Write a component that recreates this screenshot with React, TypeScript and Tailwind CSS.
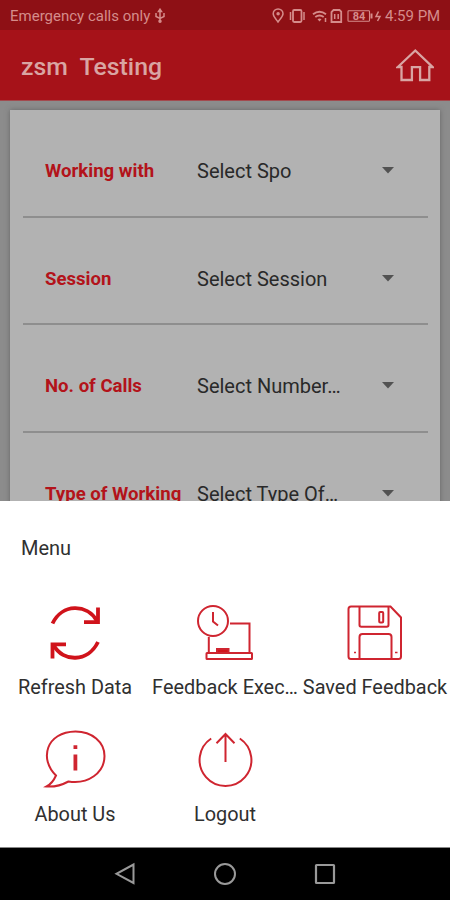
import type { ReactNode } from "react";

interface Field {
  label: string;
  value: string;
}

interface MenuEntry {
  label: string;
  icon: ReactNode;
}

const FIELDS: Field[] = [
  { label: "Working with", value: "Select Spo" },
  { label: "Session", value: "Select Session" },
  { label: "No. of Calls", value: "Select Number…" },
  { label: "Type of Working", value: "Select Type Of…" },
];

function MenuIcon({ children, width = 2 }: { children: ReactNode; width?: number }) {
  return (
    <svg viewBox="0 0 64 64" className="h-16 w-16" fill="none" stroke="#cf2530" strokeWidth={width}>
      {children}
    </svg>
  );
}

const MENU: MenuEntry[] = [
  {
    label: "Refresh Data",
    icon: (
      <MenuIcon width={3.8}>
        <g stroke="#d0131b">
          <path d="M9.5 22.500C19 2.500 44 2.500 54 20" />
          <path d="M55 6.500v14.700H41" />
          <path d="M55 41C45 61.500 20 61.500 10.500 44" />
          <path d="M9.500 57.500V43.300H23" />
        </g>
      </MenuIcon>
    ),
  },
  {
    label: "Feedback Exec…",
    icon: (
      <MenuIcon>
        <circle cx="20" cy="20" r="15" />
        <path d="M20 11v9.500l5 4" />
        <path d="M37 22.500h19.500V52M15.800 36v16" />
        <rect x="13.500" y="52" width="45.500" height="6" rx="0.500" />
        <rect x="24" y="48" width="11.500" height="4" fill="#d0131b" />
      </MenuIcon>
    ),
  },
  {
    label: "Saved Feedback",
    icon: (
      <MenuIcon>
        <path d="M8 5.500h39.500L58 16.500V55.500q0 2.500-2.500 2.500H8q-2.500 0-2.500-2.500V8q0-2.500 2.500-2.500z" />
        <path d="M16.500 5.500V24q0 1.800 1.800 1.800h25.400q1.800 0 1.800-1.800V5.500" />
        <rect x="36.200" y="11" width="4" height="10.500" rx="1" />
        <path d="M16.500 58V36q0-3 3-3h26q3 0 3 3v22" />
        <path d="M11 51.500h2M52 51.500h2.500" strokeWidth="1.500" />
      </MenuIcon>
    ),
  },
  {
    label: "About Us",
    icon: (
      <MenuIcon>
        <path d="M13 47.500C-4 31 3 4 32.500 3.500C49 3.500 61.500 14 61.500 28C61.500 45 45 56.500 25.500 53.500C18 57.500 10 59 3.500 58.500C8.500 56 11 52 13 47.500z" />
        <path d="M32.400 26.500v16M32.400 17.300v3.600" strokeWidth="3.800" />
      </MenuIcon>
    ),
  },
  {
    label: "Logout",
    icon: (
      <MenuIcon>
        <path d="M18.200 10.500A25.900 25.900 0 1 0 46.800 10.500" />
        <path d="M32.500 34V6M23.500 15.200l9-9.200l9 9.200" />
      </MenuIcon>
    ),
  },
];

function StatusBar() {
  return (
    <div className="flex h-[30px] shrink-0 items-center justify-between bg-[#8e1015] pl-2.5 pr-[9px] pt-0.5 text-[15px] text-[#d58c8b]">
      <div className="flex items-center gap-1">
        <span>Emergency calls only</span>
        <svg viewBox="0 0 12 16" className="h-4 w-3" fill="none" stroke="currentColor" strokeWidth="1.500">
          <path d="M6 2v11M2 5v3.500L6 10.500l4-2V5" />
          <path d="M4.500 3.500L6 1.200l1.500 2.300z" fill="currentColor" />
          <circle cx="6" cy="13.200" r="1" fill="currentColor" />
        </svg>
      </div>
      <div className="flex items-center">
        <svg viewBox="0 0 110 18" className="h-[18px] w-[110px]" fill="none" stroke="currentColor" strokeWidth="1.500">
          <path d="M6 15C3.500 11.500 1.200 9.500 1.200 6.800a4.900 4.900 0 0 1 9.800 0C11 9.500 8.500 11.500 6 15z" />
          <circle cx="6.100" cy="6.800" r="1" fill="currentColor" />
          <rect x="21" y="3" width="8.500" height="12" rx="1.200" strokeWidth="1.800" />
          <path d="M18.500 5v8M32 5v8" />
          <path d="M41 7.200q6.500-4.800 13 0M43.300 10q4.200-3 8.400 0" strokeWidth="1.900" />
          <path d="M47.500 14.500l-2-2.300q2-1.500 4 0z" fill="currentColor" stroke="none" />
          <path d="M53.500 11v4" />
          <path d="M61.500 3h6l1.700 1.700V15H59.500V5z" strokeWidth="1.800" />
          <path d="M62.700 7v5M66.200 7v5" />
          <rect x="76" y="3.800" width="21.500" height="10.500" rx="0.800" strokeWidth="1.100" />
          <path d="M99.500 6.500v5" strokeWidth="2" />
          <text x="87" y="13" textAnchor="middle" fontSize="11" fontWeight="700" fill="currentColor" stroke="none">
            84
          </text>
          <path d="M106.500 4.500l-2.500 5h4l-2.500 4.500" />
        </svg>
        <span className="ml-[3px] w-14 whitespace-nowrap text-[15px]">4:59 PM</span>
      </div>
    </div>
  );
}

function Header() {
  return (
    <header className="flex h-[70px] shrink-0 items-center justify-between bg-[#a61219] pl-[21px] pr-4 text-[#d9a5a3]">
      <h1 className="whitespace-pre pt-1 text-[24.800px] font-medium leading-none">zsm  Testing</h1>
      <svg viewBox="0 0 38 34" className="h-[34px] w-[38px]" fill="none" stroke="currentColor" strokeWidth="2.300">
        <path d="M1.800 19L19.300 2.500L36.500 19h-3.200V32h-9.200V19.200h-8.200V32H5.500V19z" />
      </svg>
    </header>
  );
}

function FieldRow({ label, value }: Field) {
  return (
    <div className="flex h-[107.500px] shrink-0 items-center border-b-2 border-[#8e8e8e] pl-[22px] pt-4">
      <span className="w-[152px] whitespace-nowrap pt-[3px] text-[18.600px] font-bold text-[#b3131a]">{label}</span>
      <span className="w-[185px] pt-px text-[20px] text-[#292929]">{value}</span>
      <svg viewBox="0 0 12 7" className="h-[7px] w-3" fill="#525252">
        <path d="M0 0h12L6 6.500z" />
      </svg>
    </div>
  );
}

function BottomSheet() {
  return (
    <section className="h-[346px] shrink-0 bg-white text-[#303030]">
      <h2 className="h-[100px] pl-[21px] pt-[33px] text-[20px] leading-7">Menu</h2>
      <div className="grid grid-cols-3">
        {MENU.map((entry) => (
          <div key={entry.label} className="flex h-[127px] flex-col items-center whitespace-nowrap">
            {entry.icon}
            <span className="mt-[9px] text-[19.900px] leading-7">{entry.label}</span>
          </div>
        ))}
      </div>
    </section>
  );
}

function NavBar() {
  return (
    <nav className="flex h-[53px] shrink-0 items-center justify-center gap-19 border-t border-[#888] bg-black">
      <svg viewBox="0 0 24 24" className="h-6 w-6" fill="none" stroke="#999" strokeWidth="2">
        <path d="M20.500 2.500v18.500L3.500 11.800z" />
      </svg>
      <svg viewBox="0 0 24 24" className="h-6 w-6" fill="none" stroke="#999" strokeWidth="2">
        <circle cx="12" cy="12" r="10" />
      </svg>
      <svg viewBox="0 0 24 24" className="h-6 w-6" fill="none" stroke="#999" strokeWidth="2.200">
        <rect x="3" y="3" width="18" height="18" rx="0.500" />
      </svg>
    </nav>
  );
}

export default function App() {
  return (
    <div className="flex h-[900px] w-[450px] flex-col overflow-hidden font-[Roboto,sans-serif]">
      <StatusBar />
      <Header />
      <main className="h-[401px] shrink-0 overflow-hidden border-t border-[#a34a4e] bg-[#8c8c8c] px-2.5 pt-[9px]">
        <div className="h-[430px] bg-[#b2b2b2] pl-[13px] pr-3 shadow-[0_0_5px_#666]">
          {FIELDS.map((field) => (
            <FieldRow key={field.label} {...field} />
          ))}
        </div>
      </main>
      <BottomSheet />
      <NavBar />
    </div>
  );
}
